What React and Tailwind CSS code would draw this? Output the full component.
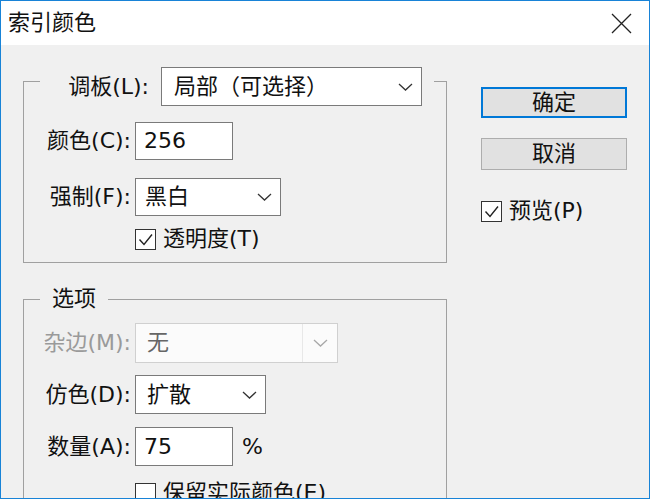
import React from "react";

function Chevron({ color = "#333" }) {
  return (
    <svg width="15" height="8" viewBox="0 0 15 8" className="shrink-0">
      <path d="M1 1 L7.5 7 L14 1" fill="none" stroke={color} strokeWidth="1.3" />
    </svg>
  );
}

function Check({ checked }) {
  return (
    <div className="w-[21px] h-[21px] border border-[#333] bg-white flex items-center justify-center shrink-0">
      {checked && (
        <svg width="17" height="17" viewBox="0 0 17 17">
          <path d="M2.5 8.5 L7 13.5 L15 3.5" fill="none" stroke="#222" strokeWidth="1.4" />
        </svg>
      )}
    </div>
  );
}

export default function App() {
  return (
    <div className="w-[650px] h-[499px] overflow-hidden border border-[#1883d7] bg-[#f0f0f0] flex flex-col font-['DejaVu_Sans','Noto_Sans_CJK_SC',sans-serif] text-[22px] text-[#111] leading-none">
      {/* Title bar */}
      <div className="h-[44px] bg-white flex items-center justify-between pl-[7px] pr-[17px] shrink-0">
        <span className="text-[22px]">索引颜色</span>
        <svg width="21" height="21" viewBox="0 0 21 21">
          <path d="M1 1 L20 20 M20 1 L1 20" stroke="#222" strokeWidth="1.3" />
        </svg>
      </div>

      {/* Body */}
      <div className="flex flex-1 min-h-0">
        {/* Left column */}
        <div className="ml-[22px] w-[424px] flex flex-col shrink-0">
          {/* Group 1 */}
          <div className="mt-[36px] h-[182px] shrink-0 border border-[#a0a0a0] flex flex-col">
            <div className="-mt-[15px] ml-[16px] mr-[12px] h-[39px] bg-[#f0f0f0] flex items-center justify-end gap-[12px] pr-[12px]">
              <span>调板(L):</span>
              <div className="w-[261px] h-[39px] bg-white border border-[#7a7a7a] flex items-center justify-between pl-[12px] pr-[8px]">
                <span>局部（可选择）</span>
                <Chevron />
              </div>
            </div>
            <div className="mt-[16px] flex items-center">
              <span className="w-[107px] text-right">颜色(C):</span>
              <div className="ml-[4px] w-[98px] h-[38px] bg-white border border-[#7a7a7a] flex items-center pl-[8px]">
                256
              </div>
            </div>
            <div className="mt-[18px] flex items-center">
              <span className="w-[107px] text-right">强制(F):</span>
              <div className="ml-[4px] w-[146px] h-[38px] bg-white border border-[#7a7a7a] flex items-center justify-between pl-[9px] pr-[8px]">
                <span>黑白</span>
                <Chevron />
              </div>
            </div>
            <div className="mt-[12px] pl-[111px] flex items-center gap-[7px]">
              <Check checked />
              <span>透明度(T)</span>
            </div>
          </div>

          {/* Group 2 */}
          <div className="mt-[36px] h-[220px] border border-[#a0a0a0] flex flex-col shrink-0">
            <div className="-mt-[15px] ml-[16px] self-start bg-[#f0f0f0] px-[12px] h-[28px] flex items-center">
              选项
            </div>
            <div className="mt-[10px] flex items-center">
              <span className="w-[107px] text-right text-[#9a9a9a]">杂边(M):</span>
              <div className="ml-[4px] w-[203px] h-[40px] bg-[#fbfbfb] border border-[#d0d0d0] flex items-stretch">
                <div className="flex-1 flex items-center pl-[11px] text-[#666]">无</div>
                <div className="w-[35px] border-l border-[#e8e8e8] flex items-center justify-center">
                  <Chevron color="#a8a8a8" />
                </div>
              </div>
            </div>
            <div className="mt-[12px] flex items-center">
              <span className="w-[107px] text-right">仿色(D):</span>
              <div className="ml-[4px] w-[131px] h-[39px] bg-white border border-[#7a7a7a] flex items-center justify-between pl-[11px] pr-[8px]">
                <span>扩散</span>
                <Chevron />
              </div>
            </div>
            <div className="mt-[13px] flex items-center">
              <span className="w-[107px] text-right">数量(A):</span>
              <div className="ml-[4px] w-[98px] h-[39px] bg-white border border-[#7a7a7a] flex items-center pl-[8px]">
                75
              </div>
              <span className="ml-[9px]">%</span>
            </div>
            <div className="mt-[16px] pl-[111px] flex items-center gap-[7px]">
              <Check checked={false} />
              <span>保留实际颜色(E)</span>
            </div>
          </div>
        </div>

        {/* Right column */}
        <div className="ml-[34px] w-[146px] flex flex-col shrink-0">
          <div className="mt-[42px] h-[31px] border-2 border-[#0078d7] bg-[#e1e1e1] flex items-center justify-center">
            确定
          </div>
          <div className="mt-[20px] h-[32px] border border-[#adadad] bg-[#e1e1e1] flex items-center justify-center">
            取消
          </div>
          <div className="mt-[30px] flex items-center gap-[7px]">
            <Check checked />
            <span>预览(P)</span>
          </div>
        </div>
      </div>
    </div>
  );
}
